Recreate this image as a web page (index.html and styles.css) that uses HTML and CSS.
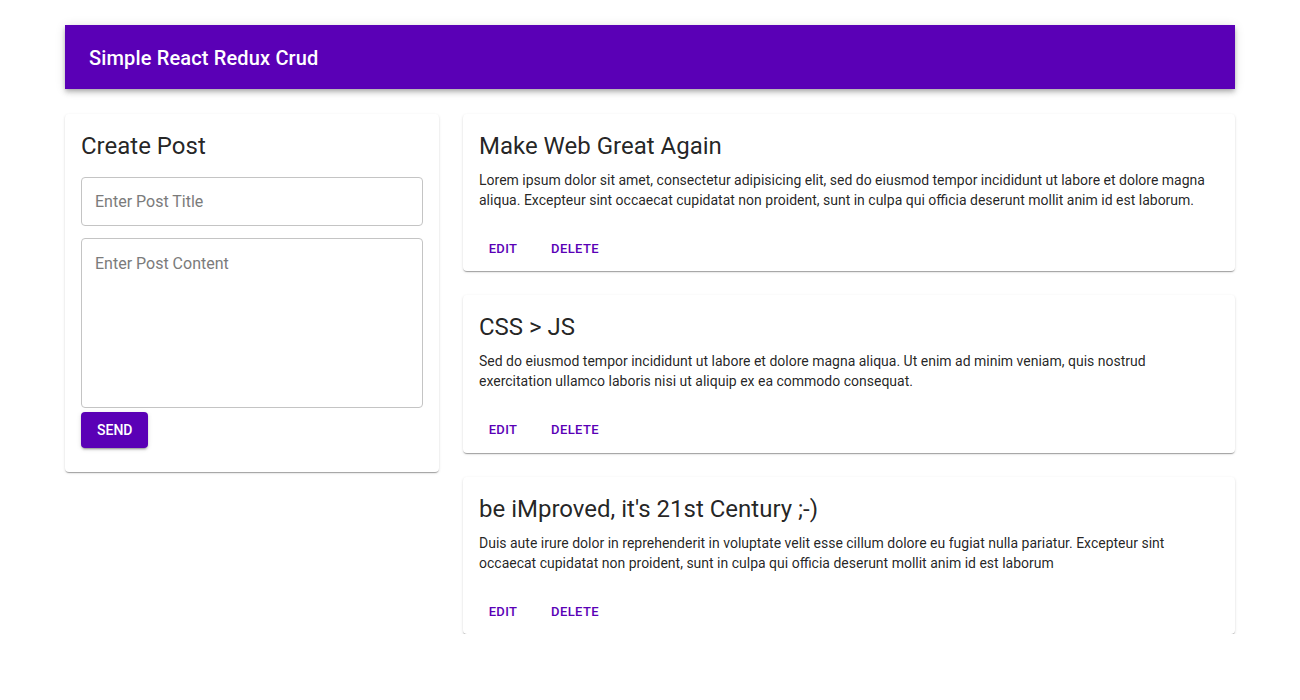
FILE: index.html
```html
<!DOCTYPE html>
<html lang="en">
<head>
<meta charset="utf-8">
<title>Simple React Redux Crud</title>
<link rel="stylesheet" href="styles.css">
</head>
<body>
<div class="container">
  <header class="appbar">
    <h6 class="appbar-title">Simple React Redux Crud</h6>
  </header>
  <main class="layout">
    <section class="card form-card">
      <h5 class="card-title form-title">Create Post</h5>
      <input class="field field-title" type="text" placeholder="Enter Post Title">
      <textarea class="field field-content" placeholder="Enter Post Content"></textarea>
      <button class="btn-contained" type="button">Send</button>
    </section>
    <div class="posts">
      <article class="card post">
        <div class="post-content">
          <h5 class="card-title post-title">Make Web Great Again</h5>
          <p class="post-body">Lorem ipsum dolor sit amet, consectetur adipisicing elit, sed do eiusmod tempor incididunt ut labore et dolore magna aliqua. Excepteur sint occaecat cupidatat non proident, sunt in culpa qui officia deserunt mollit anim id est laborum.</p>
        </div>
        <div class="post-actions">
          <button class="btn-text" type="button">Edit</button>
          <button class="btn-text" type="button">Delete</button>
        </div>
      </article>
      <article class="card post">
        <div class="post-content">
          <h5 class="card-title post-title">CSS &gt; JS</h5>
          <p class="post-body">Sed do eiusmod tempor incididunt ut labore et dolore magna aliqua. Ut enim ad minim veniam, quis nostrud exercitation ullamco laboris nisi ut aliquip ex ea commodo consequat.</p>
        </div>
        <div class="post-actions">
          <button class="btn-text" type="button">Edit</button>
          <button class="btn-text" type="button">Delete</button>
        </div>
      </article>
      <article class="card post">
        <div class="post-content">
          <h5 class="card-title post-title">be iMproved, it's 21st Century ;-)</h5>
          <p class="post-body">Duis aute irure dolor in reprehenderit in voluptate velit esse cillum dolore eu fugiat nulla pariatur. Excepteur sint occaecat cupidatat non proident, sunt in culpa qui officia deserunt mollit anim id est laborum</p>
        </div>
        <div class="post-actions">
          <button class="btn-text" type="button">Edit</button>
          <button class="btn-text" type="button">Delete</button>
        </div>
      </article>
    </div>
  </main>
</div>
</body>
</html>
```

FILE: styles.css
```css
* {
  box-sizing: border-box;
}

html, body {
  margin: 0;
  padding: 0;
  background: #ffffff;
}

body {
  font-family: Roboto, "Helvetica Neue", Arial, sans-serif;
  color: rgba(0, 0, 0, 0.87);
}

.container {
  width: 1170px;
  margin: 25px auto 0;
}

.appbar {
  height: 64px;
  display: flex;
  align-items: center;
  padding: 2px 24px 0;
  background: #5a00b6;
  color: #ffffff;
  box-shadow: 0 2px 4px -1px rgba(0, 0, 0, 0.2), 0 4px 5px 0 rgba(0, 0, 0, 0.14), 0 1px 10px 0 rgba(0, 0, 0, 0.12);
}

.appbar-title {
  margin: 0;
  font-size: 20px;
  font-weight: 500;
  line-height: 1.6;
  letter-spacing: 0.0075em;
}

.layout {
  display: grid;
  grid-template-columns: 374px 1fr;
  column-gap: 24px;
  align-items: start;
  margin-top: 25px;
}

.card {
  background: #ffffff;
  border-radius: 4px;
  box-shadow: 0 2px 1px -1px rgba(0, 0, 0, 0.2), 0 1px 1px 0 rgba(0, 0, 0, 0.14), 0 1px 3px 0 rgba(0, 0, 0, 0.12);
}

.card-title {
  margin: 0;
  font-size: 24px;
  font-weight: 400;
  line-height: 32px;
  color: rgba(0, 0, 0, 0.87);
}

.form-card {
  display: flex;
  flex-direction: column;
  align-items: flex-start;
  padding: 16px 16px 24px;
}

.form-title {
  margin-bottom: 15px;
}

.field {
  width: 100%;
  display: block;
  border: 1px solid #c4c4c4;
  border-radius: 4px;
  font-family: Roboto, "Helvetica Neue", Arial, sans-serif;
  font-size: 16px;
  line-height: 19px;
  color: rgba(0, 0, 0, 0.87);
  background: #ffffff;
  outline: none;
  margin: 0;
}

.field::placeholder {
  color: #7b7b7b;
  opacity: 1;
}

.field-title {
  height: 49px;
  padding: 0 13px;
}

.field-content {
  height: 170px;
  margin-top: 12px;
  padding: 15px 13px;
  resize: none;
}

.btn-contained {
  margin-top: 4px;
  height: 36px;
  min-width: 64px;
  padding: 0 16px;
  border: none;
  border-radius: 4px;
  background: #5a00b6;
  color: #ffffff;
  font-family: Roboto, "Helvetica Neue", Arial, sans-serif;
  font-size: 14px;
  font-weight: 500;
  letter-spacing: 0;
  text-transform: uppercase;
  box-shadow: 0 3px 1px -2px rgba(0, 0, 0, 0.2), 0 2px 2px 0 rgba(0, 0, 0, 0.14), 0 1px 5px 0 rgba(0, 0, 0, 0.12);
  cursor: pointer;
}

.posts {
  display: flex;
  flex-direction: column;
  gap: 24px;
}

.post-content {
  padding: 16px 16px 16px;
}

.post-title {
  margin-bottom: 8px;
}

.post-body {
  margin: 0;
  font-size: 14px;
  line-height: 20px;
  letter-spacing: 0;
  color: rgba(0, 0, 0, 0.87);
}

.post-actions {
  display: flex;
  align-items: center;
  gap: 8px;
  padding: 8px 8px 8.4px;
}

.btn-text {
  min-width: 64px;
  padding: 4px 5px;
  border: none;
  border-radius: 4px;
  background: transparent;
  color: #5a00b6;
  font-family: Roboto, "Helvetica Neue", Arial, sans-serif;
  font-size: 13px;
  font-weight: 500;
  line-height: 21px;
  letter-spacing: 0.02857em;
  text-transform: uppercase;
  cursor: pointer;
}
```
